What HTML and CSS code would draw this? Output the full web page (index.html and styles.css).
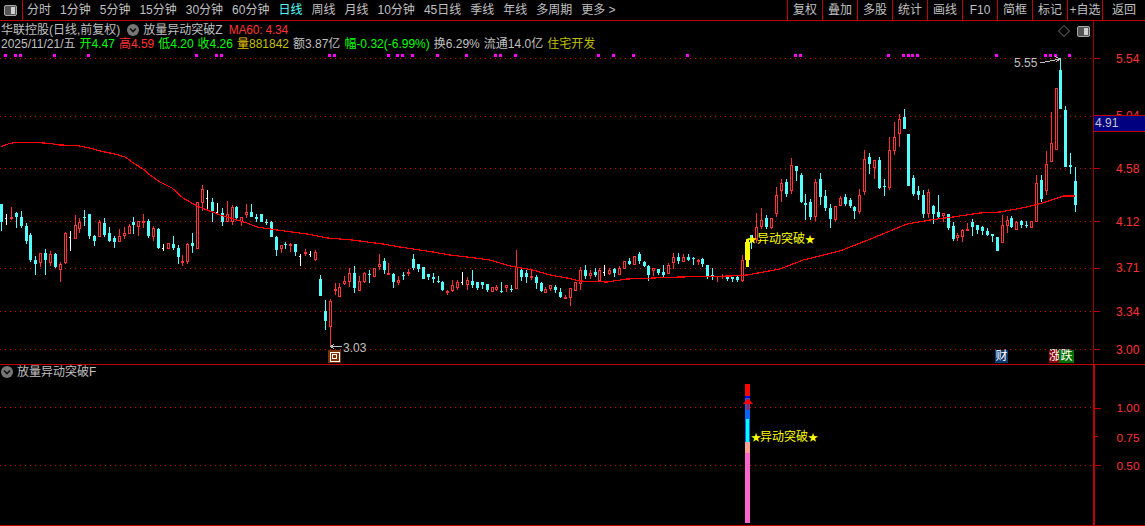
FILE: index.html
```html
<!DOCTYPE html>
<html lang="zh">
<head>
<meta charset="utf-8">
<title>华联控股</title>
<link rel="stylesheet" href="styles.css">
</head>
<body>
<div class="app">
  <header class="toolbar">
    <div class="layout-btn">
      <svg class="panel-icon" viewBox="0 0 13 11"><rect x="0.5" y="0.5" width="12" height="10" rx="1.5" fill="#555" stroke="#a8a8a8"/><rect x="7" y="2" width="4" height="7" fill="#d0d0d0"/></svg>
    </div>
    <nav class="periods">
      <span>分时</span><span>1分钟</span><span>5分钟</span><span>15分钟</span><span>30分钟</span><span>60分钟</span><span class="active">日线</span><span>周线</span><span>月线</span><span>10分钟</span><span>45日线</span><span>季线</span><span>年线</span><span>多周期</span><span>更多 &gt;</span>
    </nav>
    <nav class="tools">
      <span>复权</span><span>叠加</span><span>多股</span><span>统计</span><span>画线</span><span>F10</span><span>简框</span><span>标记</span><span>+自选</span><span class="back">返回</span>
    </nav>
  </header>

  <section class="pane pane-main">
    <div class="plot">
      <svg class="canvas" viewBox="0 21 1093 343" shape-rendering="crispEdges">
        <g class="grid">
          <line x1="0" x2="1093" y1="58.5" y2="58.5"/>
          <line x1="0" x2="1093" y1="116.5" y2="116.5"/>
          <line x1="0" x2="1093" y1="168.5" y2="168.5"/>
          <line x1="0" x2="1093" y1="221.5" y2="221.5"/>
          <line x1="0" x2="1093" y1="268.5" y2="268.5"/>
          <line x1="0" x2="1093" y1="311.5" y2="311.5"/>
          <line x1="0" x2="1093" y1="349.5" y2="349.5"/>
        </g>
        <g id="markers"></g>
        <g id="candles"></g>
        <polyline id="ma60" class="ma"/>
        <rect class="yellow" x="746" y="239" width="3" height="28"/>
        <rect class="yellow" x="745" y="242" width="5" height="18"/>
        <g>
          <text class="note" x="1014" y="67">5.55</text>
          <path class="arrow" d="M1040 63 L1060 59 M1055 56.5 L1060 59 L1056 62"/>
          <text class="note" x="343" y="352">3.03</text>
          <path class="arrow" d="M342 346.500 L331 346.500 M334 344 L331 346.500 L334 349"/>
          <rect x="328" y="350" width="13" height="13" fill="#7d3300"/>
          <rect x="330" y="352" width="9" height="9" fill="none" stroke="#fff"/>
          <rect x="332.500" y="354.500" width="4" height="4" fill="none" stroke="#fff"/>
          <text class="signal" y="243"><tspan class="star" x="747">★</tspan><tspan x="757">异动突破</tspan><tspan class="star" x="805">★</tspan></text>
        </g>
      </svg>
      <div class="info">
        <div class="info-row">
          <span class="name">华联控股(日线,前复权)</span>
          <svg class="chevron" viewBox="0 0 12 12"><circle cx="6" cy="6" r="6" fill="#777"/><path d="M3 4.500 L6 7.500 L9 4.500" fill="none" stroke="#111" stroke-width="1.600"/></svg>
          <span class="name">放量异动突破Z</span>
          <span class="red ma-label">MA60: 4.34</span>
        </div>
        <div class="info-row quote">
          <span>2025/11/21/五</span>
          <span class="green">开4.47</span>
          <span><span class="red">高4.59</span></span>
          <span class="green">低4.20</span>
          <span class="green">收4.26</span>
          <span class="olive"><span class="yellow-text">量</span>881842</span>
          <span>额3.87亿</span>
          <span class="green">幅-0.32(-6.99%)</span>
          <span>换6.29%</span>
          <span>流通14.0亿</span>
          <span class="olive">住宅开发</span>
        </div>
      </div>
      <div class="corner">
        <svg class="diamond" viewBox="0 0 12 12"><path d="M6 0.500 L11.500 6 L6 11.500 L0.500 6 Z" fill="none" stroke="#777"/></svg>
        <svg class="panel-icon" viewBox="0 0 13 11"><rect x="0.5" y="0.5" width="12" height="10" rx="1.5" fill="#555" stroke="#a8a8a8"/><rect x="7" y="2" width="4" height="7" fill="#d0d0d0"/></svg>
      </div>
      <div class="badges">
        <span class="badge cai">财</span>
        <span class="badge zhang">涨</span>
        <span class="badge die">跌</span>
      </div>
    </div>
    <div class="axis">
      <svg class="canvas" viewBox="1094 21 51 343" shape-rendering="crispEdges">
        <g class="ticks">
          <line x1="1094" x2="1100" y1="58.5" y2="58.5"/>
          <line x1="1094" x2="1100" y1="168.5" y2="168.5"/>
          <line x1="1094" x2="1100" y1="221.5" y2="221.5"/>
          <line x1="1094" x2="1100" y1="268.5" y2="268.5"/>
          <line x1="1094" x2="1100" y1="311.5" y2="311.5"/>
          <line x1="1094" x2="1100" y1="349.5" y2="349.5"/>
        </g>
        <g class="axis-labels">
          <text x="1116" y="63">5.54</text>
          <text x="1116" y="120">5.04</text>
          <text x="1116" y="173">4.58</text>
          <text x="1116" y="226">4.12</text>
          <text x="1116" y="272">3.71</text>
          <text x="1116" y="316">3.34</text>
          <text x="1116" y="354">3.00</text>
        </g>
      </svg>
      <div class="price-tag">4.91</div>
    </div>
  </section>

  <section class="pane pane-sub">
    <div class="plot">
      <svg class="canvas" viewBox="0 365 1093 160" shape-rendering="crispEdges">
        <g class="grid">
          <line x1="0" x2="1093" y1="407.5" y2="407.5"/>
          <line x1="0" x2="1093" y1="465.5" y2="465.5"/>
        </g>
        <rect x="745" y="384" width="5" height="12" fill="#ff0000"/>
        <rect x="745" y="396" width="5" height="2" fill="#0000e0"/>
        <rect x="745" y="398" width="5" height="21" fill="#0066ff"/>
        <rect x="745" y="419" width="5" height="23" fill="#0066ff"/>
        <rect x="746" y="419" width="3" height="23" fill="#00ffff"/>
        <rect x="745" y="442" width="5" height="11" fill="#ffa090"/>
        <rect x="745" y="453" width="5" height="70" fill="#ff66cc"/>
        <path d="M743 404 L748 398 L753 404 L749 404 L749 410 L747 410 L747 404 Z" fill="#ff0000" shape-rendering="auto"/>
        <text class="signal" y="441"><tspan class="star" x="751">★</tspan><tspan x="760">异动突破</tspan><tspan class="star" x="808">★</tspan></text>
      </svg>
      <div class="sub-title">
        <svg class="chevron" viewBox="0 0 12 12"><circle cx="6" cy="6" r="6" fill="#777"/><path d="M3 4.500 L6 7.500 L9 4.500" fill="none" stroke="#111" stroke-width="1.600"/></svg>
        <span class="name">放量异动突破F</span>
      </div>
    </div>
    <div class="axis">
      <svg class="canvas" viewBox="1094 365 51 160" shape-rendering="crispEdges">
        <g class="ticks">
          <line x1="1094" x2="1100" y1="407.5" y2="407.5"/>
          <line x1="1094" x2="1097" y1="436.5" y2="436.5"/>
          <line x1="1094" x2="1100" y1="465.5" y2="465.5"/>
        </g>
        <g class="axis-labels">
          <text x="1116" y="411">1.00</text>
          <text x="1116" y="442">0.75</text>
          <text x="1116" y="470">0.50</text>
        </g>
      </svg>
    </div>
  </section>
</div>
<script src="chart.js"></script>
</body>
</html>
```
FILE: styles.css
```css
* { box-sizing: border-box; }
html, body { margin: 0; padding: 0; background: #000; }
body { width: 1145px; height: 526px; overflow: hidden; }
.app {
  width: 1145px; height: 526px; display: flex; flex-direction: column;
  background: #000; color: #c0c0c0;
  font: 12px/14px "Liberation Sans", "Noto Sans CJK SC", sans-serif;
}
.toolbar {
  height: 21px; flex: none; display: flex; align-items: stretch;
  border-bottom: 1px solid #c00000;
}
.layout-btn {
  width: 23px; flex: none; display: flex; align-items: center; justify-content: center;
  padding-right: 2px; border-right: 1px solid #c00000;
}
.panel-icon { width: 13px; height: 11px; display: block; }
.periods {
  display: flex; align-items: center; gap: 9px; padding-left: 4px; flex: 1;
  line-height: 20px; white-space: nowrap;
}
.periods .active { color: #54ffff; }
.tools { display: flex; flex: none; line-height: 20px; }
.tools span {
  width: 35px; text-align: center; border-left: 1px solid #c00000; white-space: nowrap;
}
.tools .back { width: 43px; }

.pane { display: flex; flex: none; }
.pane-main { height: 344px; border-bottom: 1px solid #c00000; }
.pane-sub { height: 161px; border-bottom: 1px solid #c00000; }
.plot { position: relative; width: 1093px; flex: none; overflow: hidden; }
.axis { position: relative; flex: 1; border-left: 1px solid #a00000; }
.pane-sub .axis { border-left: 2px solid #c00000; border-top: 1px solid #c00000; margin-top: -1px; }
.canvas { position: absolute; inset: 0; width: 100%; height: 100%; display: block; }

.grid line { stroke: #d00000; stroke-width: 1; stroke-dasharray: 1 4; }
.ticks line { stroke: #c00000; stroke-width: 1; }
.axis-labels text { fill: #ff3232; font-size: 12px; }
.ma { fill: none; stroke: #ff0000; stroke-width: 1.200; }
.yellow { fill: #ffff00; }
.note { fill: #c0c0c0; font-size: 12px; }
.arrow { fill: none; stroke: #c0c0c0; stroke-width: 1; }
.signal { fill: #ffff00; font-size: 12px; }
.star { font-size: 10px; }

.info { position: relative; padding: 2px 0 0 1px; }
.info-row { display: flex; align-items: center; height: 14px; white-space: nowrap; }
.info-row .chevron { margin: 0 4px 0 7px; }
.chevron { width: 12px; height: 12px; display: block; flex: none; }
.ma-label { margin-left: 6px; letter-spacing: -0.200px; }
.quote { gap: 4px; }
.red { color: #ff3232; }
.green { color: #00ff00; }
.olive { color: #c0c000; }
.yellow-text { color: #e0c000; }

.corner {
  position: absolute; top: 4px; right: 3px; display: flex; align-items: center; gap: 7px;
}
.diamond { width: 12px; height: 12px; display: block; }

.badges { position: absolute; top: 329px; left: 995px; display: flex; }
.badge {
  height: 13px; line-height: 13px; font-size: 12px; color: #fff; text-align: center; display: block;
}
.cai { width: 13px; background: #0a3a6e; margin-right: 41px; }
.zhang { width: 12px; background: #8a0000; text-align: left; }
.die { width: 15px; background: #007000; margin-left: -2px; position: relative; }

.price-tag {
  position: absolute; top: 94px; left: 0; right: 0; height: 17px; padding-left: 1px;
  background: #000080; border-top: 1px solid #c00000; border-bottom: 1px solid #c00000;
  color: #c8c8c8; font-size: 12px; line-height: 15px;
}

.sub-title { position: relative; display: flex; align-items: center; gap: 4px; padding-left: 1px; height: 14px; }
```
FILE: chart.js
```js
// Daily candles read from the chart: [type, wickTop, wickBottom, bodyTop, bodyBottom]
// Each block is in 3x units, relative to its own base y.
var blocks = [
  [130, [
    ['c',222,302,222,275],['w',252,285,265,267],['r',232,270,262,268],['c',245,295,250,261],['c',243,295,261,289],
    ['c',280,342,289,333],['c',310,395,315,390],['c',378,435,390,402],['r',369,410,370,398],['c',358,435,369,390],
    ['r',364,408,372,400],['c',370,415,372,412],['r',396,456,402,420],['r',306,402,310,399],['w',304,362,322,324],
    ['r',255,327,286,326],['r',265,310,276,296],['c',240,288,261,263],['c',252,327,252,317],['c',315,348,318,333],
    ['r',270,321,275,320],['c',264,322,279,315],['c',291,336,309,333],['c',318,354,323,336],['r',297,337,318,336],
    ['r',292,327,309,318],['r',283,312,288,311],['c',262,313,276,285],['r',273,318,274,290],['r',252,294,273,279],
    ['c',268,325,273,318],['r',288,333,294,321],['c',294,358,297,354],['w',342,363,354,356],['r',339,358,340,357],
    ['c',318,360,342,353],['c',346,402,354,381],['r',376,407,393,400],['r',340,402,342,396],['c',309,369,339,348],
    ['r',217,357,217,357],['r',165,243,178,218],['w',180,243,205,207],['c',205,275,216,243],['w',219,248,245,247],
    ['c',234,288,249,276],['r',213,276,252,276],['r',226,285,232,276],['c',228,267,231,264],['r',261,288,262,276],
    ['r',222,264,246,255],['c',222,261,246,261],['c',252,276,261,268],['c',252,276,252,276],['c',267,285,275,277],
    ['c',273,322,276,321],['c',318,378,321,360],['r',345,369,345,357],['c',336,357,342,344],['r',340,366,342,348],
    ['c',342,378,342,366],['w',372,408,378,380],['r',358,378,366,373],['w',363,381,372,374],['r',360,393,366,390]
  ]],
  [240, [
    ['c',105,168,117,168],['c',180,270,213,243],['r',178,320,184,260],['r',130,165,148,153],['r',130,171,142,171],
    ['r',108,135,124,132],['r',85,140,99,125],['c',78,159,99,144],['r',108,153,124,153],['r',95,128,99,125],
    ['c',90,129,103,105],['r',84,111,85,111],['r',42,90,72,81],['c',54,102,63,90],['r',69,105,99,105],
    ['c',99,144,102,126],['r',108,135,121,130],['c',96,120,105,107],['r',87,108,96,102],['c',42,90,57,84],
    ['c',72,96,72,87],['c',82,117,82,117],['c',102,120,102,111],['c',99,129,111,117],['c',108,129,124,126],
    ['c',123,153,126,150],['r',150,165,153,159],['r',120,156,135,153],['r',120,150,126,144],['w',96,135,127,129],
    ['r',111,150,120,135],['c',90,144,123,135],['c',126,150,126,144],['c',126,147,126,135],['c',132,156,132,150],
    ['r',141,156,141,155],['r',135,153,141,150],['c',126,159,153,155],['r',135,156,135,144],['c',135,156,147,149],
    ['r',30,147,81,147],['c',80,123,90,111],['c',90,129,99,111],['r',90,120,108,114],['c',105,147,111,129],
    ['c',126,156,129,153],['r',141,159,147,159],['r',135,153,135,147],['c',135,159,141,150],['c',144,174,156,171],
    ['r',165,177,171,177],['r',144,198,144,174],['r',126,153,126,153],['r',81,150,90,132],['c',75,117,90,108],
    ['r',90,117,99,108],['c',84,111,96,105],['r',84,123,90,123]
  ]],
  [220, [
    ['w',135,168,156,158],['r',145,165,150,162],['c',143,170,147,160],['r',137,165,143,165],['r',123,148,123,148],
    ['c',114,135,122,132],['r',108,135,108,135],['c',96,132,102,123],['c',123,141,126,138],['c',135,183,138,165],
    ['r',144,168,144,153],['c',147,165,147,159],['c',135,171,156,165],['r',130,162,135,162],['r',99,147,111,129],
    ['c',99,132,111,123],['r',102,126,111,126],['c',102,123,111,120],['c',111,135,114,117],['r',117,135,120,126],
    ['c',114,141,117,132],['c',135,177,135,168],['c',144,180,165,171],['r',168,186,168,171],['r',162,177,168,171],
    ['c',165,183,165,177],['c',171,186,171,177],['c',168,186,171,180],['r',105,186,120,183],['n',0,0,0,0]
  ]],
  [100, [
    ['c',405,447,405,420],['r',340,430,382,420],['r',324,387,360,382],['c',346,387,354,382],['r',354,386,354,384],
    ['r',262,352,286,342],['r',237,305,250,273],['c',237,290,246,282],['r',174,282,195,273],['c',198,243,198,213],
    ['c',219,308,225,305],['c',282,360,309,315],['c',296,360,306,351],['r',237,362,246,352],['c',219,315,237,291],
    ['c',270,333,288,324],['c',312,384,324,357],['r',318,366,319,360],['r',288,318,294,318],['c',282,318,291,312],
    ['c',294,324,300,318],['c',318,357,321,333],['r',267,342,285,336],['r',150,285,177,276],['c',159,222,171,192],
    ['r',180,237,180,204],['c',171,267,180,264],['c',237,288,258,260],['r',111,270,150,264],['r',66,165,111,153],
    ['r',42,141,57,102],['c',27,87,51,87],['c',102,258,102,258],['c',225,288,234,282],['c',258,300,273,285],
    ['c',270,354,285,342],['r',267,354,276,342],['c',315,372,318,342],['c',285,357,336,351],['r',339,366,339,348],
    ['c',342,390,342,384],['c',366,423,378,417],['r',399,423,405,414],['r',387,426,390,411],['r',369,393,387,393],
    ['c',357,408,366,381],['c',375,402,375,390],['c',378,405,381,393],['c',384,408,393,405],['c',402,426,402,408],
    ['c',411,453,411,453]
  ]],
  [50, [
    ['r',495,578,525,578],['r',498,549,510,528],['c',498,534,504,531],['r',513,540,516,540],['c',510,534,513,525],
    ['c',512,534,525,527],['r',513,534,513,534],['r',375,516,400,516],['c',375,456,390,447],['r',303,435,342,423],
    ['r',186,336,279,336],['r',114,300,114,300],['c',24,177,60,177],['c',168,351,180,351],['c',309,372,345,351],
    ['c',351,486,393,465]
  ]]
];

var ma = [[1,146.5],[8,144],[15,142.5],[33,142.3],[50,143.5],[60,145],[77,145.5],[90,148],[100,151],[115,154],
  [125,157],[135,164],[143,169],[150,175],[160,182],[172,188],[183,198],[197,206],[220,215],[247,223],[257,227],
  [277,230],[307,234],[328,238],[352,240],[383,244],[400,247],[433,252],[450,255],[467,257],[490,260],[510,266],
  [533,270],[550,275],[567,278],[580,281],[607,282],[627,279],[680,277],[730,276],[747,275],[780,269],[803,260],
  [820,256],[840,251],[873,238],[907,224],[930,220],[953,217],[980,213],[1000,212],[1027,207],[1043,203],[1063,196],[1075,196]];

var markers = [5,15,20,54,88,196,216,221,329,334,388,397,402,412,437,466,495,500,515,598,613,633,687,795,800,
  888,903,908,912,917,996,1045,1050,1055,1069];

var NS = 'http://www.w3.org/2000/svg';
var COLORS = { c: '#54ffff', r: '#ff3232', w: '#ffffff' };

function rect(parent, x, y, w, h, fill) {
  var el = document.createElementNS(NS, 'rect');
  el.setAttribute('x', x); el.setAttribute('y', y);
  el.setAttribute('width', w); el.setAttribute('height', Math.max(h, 1));
  el.setAttribute('fill', fill);
  parent.appendChild(el);
}

var layer = document.getElementById('candles');
var index = 0;
blocks.forEach(function (block) {
  var base = block[0];
  block[1].forEach(function (d) {
    var i = index++;
    if (d[0] === 'n') return;
    var x = Math.round(1 + i * 4.905);
    var y = function (v) { return Math.round(base + v / 3); };
    var wt = y(d[1]), wb = y(d[2]), bt = y(d[3]), bb = y(d[4]);
    var col = COLORS[d[0]];
    rect(layer, x, wt, 1, wb - wt, col);
    if (d[0] === 'w') {
      rect(layer, x - 1, bt, 2, 1, col);
    } else if (bb - bt <= 1) {
      rect(layer, x - 1, bt, 3, 1, col);
    } else {
      rect(layer, x - 1, bt, 3, bb - bt, col);
      if (d[0] === 'r' && bb - bt > 2) rect(layer, x, bt + 1, 1, bb - bt - 2, '#000');
    }
  });
});

document.getElementById('ma60').setAttribute('points', ma.map(function (p) { return p.join(','); }).join(' '));

var markerLayer = document.getElementById('markers');
markers.forEach(function (x) { rect(markerLayer, x - 1, 54, 3, 3, '#ff00ff'); });
```
